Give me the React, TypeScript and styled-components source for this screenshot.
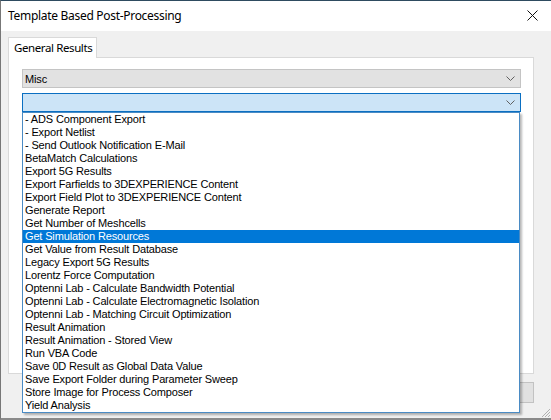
import React from "react";
import styled, { createGlobalStyle } from "styled-components";

const GlobalStyle = createGlobalStyle`
  html, body { margin: 0; padding: 0; background: #6a6a6a; }
  #root { width: 551px; height: 420px; }
`;

const Window = styled.div`
  position: relative;
  width: 551px;
  height: 420px;
  box-sizing: border-box;
  border-top: 1px solid #2e4b60;
  border-left: 1px solid #777;
  border-bottom: 2px solid #8a8a8a;
  background: #f0f0f0;
  display: flex;
  flex-direction: column;
  font-family: "Liberation Sans", Arial, sans-serif;
`;

const TitleBar = styled.div`
  height: 30px;
  background: #fff;
  display: flex;
  align-items: center;
  justify-content: space-between;
  padding: 0 13px 1px 7px;
  box-sizing: border-box;
  flex-shrink: 0;
`;

const Title = styled.span`
  font-family: "Noto Sans", "Open Sans", sans-serif;
  font-size: 12px;
  letter-spacing: -0.3px;
  color: #000;
`;

const CloseIcon = styled.svg`
  width: 11px;
  height: 11px;
  display: block;
`;

const Body = styled.div`
  display: flex;
  flex-direction: column;
  padding: 6px 17px 0 7px;
`;

const TabStrip = styled.div`
  display: flex;
  height: 21px;
  margin-bottom: -1px;
  position: relative;
  z-index: 1;
`;

const Tab = styled.div`
  width: 89px;
  box-sizing: border-box;
  background: #fff;
  border: 1px solid #d9d9d9;
  border-bottom: none;
  font-family: "Noto Sans", "Open Sans", sans-serif;
  font-size: 11.5px;
  letter-spacing: -0.4px;
  white-space: nowrap;
  color: #000;
  padding: 0 0 1px 5px;
  display: flex;
  align-items: center;
  height: 21px;
`;

const Panel = styled.div`
  height: 317px;
  box-sizing: border-box;
  background: #fff;
  border: 1px solid #d9d9d9;
  padding: 11px 12px 0 13px;
  display: flex;
  flex-direction: column;
  gap: 5px;
`;

const ComboWrap = styled.div`
  position: relative;
`;

const Combo = styled.div<{ $active?: boolean }>`
  height: 19px;
  box-sizing: border-box;
  border: 1px solid ${(p) => (p.$active ? "#0a6fc2" : "#c4c4c4")};
  background: ${(p) => (p.$active ? "#cce4f7" : "#e2e2e2")};
  display: flex;
  align-items: center;
  justify-content: space-between;
  padding: 0 5px 0 2px;
  font-size: 11px;
  letter-spacing: -0.15px;
  color: #000;
`;

const Chevron = styled.svg`
  width: 9px;
  height: 5px;
  display: block;
`;

const ListBox = styled.div`
  position: absolute;
  top: 100%;
  left: 0;
  width: 498px;
  box-sizing: border-box;
  border: 1px solid #4a8bc4;
  background: #fff;
  box-shadow: 2px 2px 2px rgba(0, 0, 0, 0.28);
  z-index: 5;
  display: flex;
  flex-direction: column;
`;

const Item = styled.div<{ $selected?: boolean }>`
  height: 13px;
  line-height: 13px;
  font-size: 11px;
  letter-spacing: -0.15px;
  padding-left: 2px;
  white-space: nowrap;
  color: ${(p) => (p.$selected ? "#fff" : "#000")};
  background: ${(p) => (p.$selected ? "#0078d7" : "transparent")};
`;

const ButtonRow = styled.div`
  display: flex;
  justify-content: flex-end;
  margin-top: 8px;
`;

const Button = styled.div`
  width: 75px;
  height: 21px;
  box-sizing: border-box;
  border: 1px solid #c2c2c2;
  background: #e1e1e1;
`;

const Grip = styled.svg`
  position: absolute;
  right: 0;
  bottom: 0;
  width: 12px;
  height: 12px;
`;

const items = [
  "- ADS Component Export",
  "- Export Netlist",
  "- Send Outlook Notification E-Mail",
  "BetaMatch Calculations",
  "Export 5G Results",
  "Export Farfields to 3DEXPERIENCE Content",
  "Export Field Plot to 3DEXPERIENCE Content",
  "Generate Report",
  "Get Number of Meshcells",
  "Get Simulation Resources",
  "Get Value from Result Database",
  "Legacy Export 5G Results",
  "Lorentz Force Computation",
  "Optenni Lab - Calculate Bandwidth Potential",
  "Optenni Lab - Calculate Electromagnetic Isolation",
  "Optenni Lab - Matching Circuit Optimization",
  "Result Animation",
  "Result Animation - Stored View",
  "Run VBA Code",
  "Save 0D Result as Global Data Value",
  "Save Export Folder during Parameter Sweep",
  "Store Image for Process Composer",
  "Yield Analysis",
];

const ChevronIcon = () => (
  <Chevron viewBox="0 0 9 5">
    <path d="M0.5 0.5 L4.5 4.5 L8.5 0.5" fill="none" stroke="#606060" strokeWidth="1" />
  </Chevron>
);

export default function App() {
  return (
    <>
      <GlobalStyle />
      <Window>
        <TitleBar>
          <Title>Template Based Post-Processing</Title>
          <CloseIcon viewBox="0 0 11 11">
            <path d="M0.5 0.5 L10.5 10.5 M10.5 0.5 L0.5 10.5" stroke="#111" strokeWidth="1" />
          </CloseIcon>
        </TitleBar>
        <Body>
          <TabStrip>
            <Tab>General Results</Tab>
          </TabStrip>
          <Panel>
            <Combo>
              <span>Misc</span>
              <ChevronIcon />
            </Combo>
            <ComboWrap>
              <Combo $active>
                <span />
                <ChevronIcon />
              </Combo>
              <ListBox>
                {items.map((t) => (
                  <Item key={t} $selected={t === "Get Simulation Resources"}>
                    {t}
                  </Item>
                ))}
              </ListBox>
            </ComboWrap>
          </Panel>
          <ButtonRow>
            <Button />
          </ButtonRow>
        </Body>
        <Grip viewBox="0 0 12 12">
          <path d="M11 3 L3 11 M11 6 L6 11 M11 9 L9 11" stroke="#b0b0b0" strokeWidth="1" />
        </Grip>
      </Window>
    </>
  );
}
